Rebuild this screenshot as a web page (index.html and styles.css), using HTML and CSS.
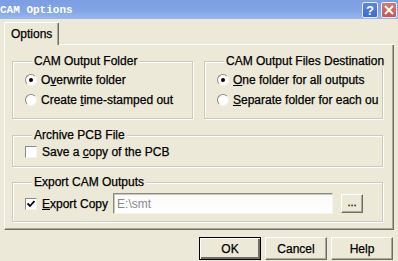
FILE: index.html
```html
<!DOCTYPE html>
<html lang="en">
<head>
    <meta charset="UTF-8">
    <title>CAM Options</title>
    <link rel="stylesheet" href="styles.css">
</head>
<body>
    <div class="window">
        <div class="titlebar">
            <span class="title">CAM Options</span>
            <div class="title-buttons">
                <span class="tb-btn tb-help">?</span>
                <span class="tb-btn tb-close">
                    <svg width="10" height="10" viewBox="0 0 10 10"><path d="M1 1L9 9M9 1L1 9" stroke="#fff" stroke-width="2"/></svg>
                </span>
            </div>
        </div>

        <div class="tabs">
            <div class="tab">Options</div>
            <div class="tab-line"></div>
        </div>

        <div class="panel">
            <div class="row">
                <fieldset class="group">
                    <legend>CAM Output Folder</legend>
                    <label class="option"><span class="radio checked"></span><span>O<u>v</u>erwrite folder</span></label>
                    <label class="option"><span class="radio"></span><span>Create <u>t</u>ime-stamped out</span></label>
                </fieldset>
                <fieldset class="group">
                    <legend>CAM Output Files Destination</legend>
                    <label class="option"><span class="radio checked"></span><span><u>O</u>ne folder for all outputs</span></label>
                    <label class="option"><span class="radio"></span><span><u>S</u>eparate folder for each ou</span></label>
                </fieldset>
            </div>

            <fieldset class="group group-archive">
                <legend>Archive PCB File</legend>
                <label class="option option-short"><span class="check"></span><span>Save a <u>c</u>opy of the PCB</span></label>
            </fieldset>

            <fieldset class="group group-export">
                <legend>Export CAM Outputs</legend>
                <div class="export-row">
                    <label class="option"><span class="check checked">
                        <svg width="8" height="8" viewBox="0 0 8 8"><path d="M0.5 3.5L3 6L7.5 1" fill="none" stroke="#000" stroke-width="1.8"/></svg>
                    </span><span><u>E</u>xport Copy</span></label>
                    <div class="path-input">E:\smt</div>
                    <button class="button button-small">...</button>
                </div>
            </fieldset>
        </div>

        <div class="actions">
            <button class="button button-default">OK</button>
            <button class="button">Cancel</button>
            <button class="button">Help</button>
        </div>
    </div>
</body>
</html>
```

FILE: styles.css
```css
body {
    margin: 0;
    background-color: #ECE9D8;
    font-family: "Liberation Sans", Arial, sans-serif;
    font-size: 12px;
    color: #000;
    -webkit-text-stroke: 0.25px #000;
}
.window {
    width: 398px;
    height: 261px;
    overflow: hidden;
}

/* title bar */
.titlebar {
    height: 19px;
    display: flex;
    align-items: center;
    justify-content: space-between;
    background: linear-gradient(#7b9de2, #83a6e7 60%, #9ab8ee);
}
.title {
    font-family: "Liberation Mono", monospace;
    font-weight: bold;
    font-size: 11px;
    color: #fff;
    -webkit-text-stroke: 0;
    margin-top: 1px;
}
.title-buttons {
    display: flex;
    gap: 3px;
    margin-right: 1px;
    margin-top: 1px;
}
.tb-btn {
    width: 16px;
    height: 16px;
    box-sizing: border-box;
    border: 1px solid #e8eefc;
    border-radius: 2px;
    display: flex;
    align-items: center;
    justify-content: center;
    color: #fff;
    font-weight: bold;
    font-size: 13px;
    -webkit-text-stroke: 0;
}
.tb-help {
    background: linear-gradient(#5a86e0, #3d6ad3);
}
.tb-close {
    background: linear-gradient(#d07a70, #c05a55);
}

/* tabs */
.tabs {
    display: flex;
    margin: 3px 4px 0 4px;
    height: 23px;
}
.tab {
    width: 55px;
    box-sizing: border-box;
    border-top: 1px solid #fff;
    border-left: 1px solid #fff;
    border-right: 1px solid #716f64;
    box-shadow: inset -1px 0 0 #aca899;
    border-radius: 2px 2px 0 0;
    padding: 4px 0 0 6px;
}
.tab-line {
    flex: 1;
    border-bottom: 1px solid #fff;
}

/* main panel */
.panel {
    margin: 0 4px 0 4px;
    padding: 9px 10px 7px 7px;
    border-left: 1px solid #fff;
    border-right: 1px solid #716f64;
    border-bottom: 1px solid #716f64;
    box-shadow: inset -1px -1px 0 #aca899;
}
.row {
    display: grid;
    grid-template-columns: 181px 179px;
    gap: 11px;
}
.group {
    margin: 0;
    min-width: 0;
    padding: 2px 4px 8px 12px;
    border: 1px solid #cdcab9;
    box-shadow: inset 1px 1px 0 #fff, 1px 1px 0 #fff;
}
.group legend {
    padding: 0 2px;
    margin-left: 7px;
    line-height: 14px;
    white-space: nowrap;
    background-color: #ECE9D8;
}
.group-archive {
    margin-top: 9px;
    padding-top: 1px;
    padding-bottom: 5px;
}
.group-export {
    margin-top: 8px;
    padding-top: 4px;
    padding-bottom: 7px;
}

.option {
    display: flex;
    align-items: center;
    gap: 4px;
    height: 20px;
    white-space: nowrap;
}
.option-short {
    height: 18px;
}
.radio {
    flex: none;
    width: 12px;
    height: 12px;
    box-sizing: border-box;
    border-radius: 50%;
    border: 1px solid;
    border-color: #8d8b82 #f4f3ee #f4f3ee #8d8b82;
    background-color: #fff;
    display: flex;
    align-items: center;
    justify-content: center;
}
.radio.checked::after {
    content: '';
    width: 4px;
    height: 4px;
    border-radius: 50%;
    background-color: #000;
}
.check {
    flex: none;
    width: 12px;
    height: 12px;
    box-sizing: border-box;
    border: 1px solid;
    border-color: #8d8b82 #f4f3ee #f4f3ee #8d8b82;
    background-color: #fff;
    display: flex;
    align-items: center;
    justify-content: center;
    margin-right: 1px;
}

.export-row {
    display: flex;
    align-items: center;
    height: 21px;
}
.path-input {
    width: 220px;
    height: 21px;
    box-sizing: border-box;
    margin-left: 5px;
    padding: 3px 3px;
    border: 1px solid;
    border-color: #8d8b82 #f4f3ee #f4f3ee #8d8b82;
    box-shadow: inset 1px 1px 0 #c9c6b8;
    background: linear-gradient(#fafaf8, #fff);
    color: #8a8a8a;
    -webkit-text-stroke: 0;
}

/* buttons */
.button {
    font-family: inherit;
    font-size: 12px;
    color: #000;
    -webkit-text-stroke: 0.25px #000;
    background-color: #ECE9D8;
    width: 62px;
    height: 23px;
    padding: 0;
    border: 1px solid;
    border-color: #fff #716f64 #716f64 #fff;
    box-shadow: inset -1px -1px 0 #aca899;
}
.button-small {
    width: 22px;
    height: 19px;
    margin-left: 8px;
    font-size: 11px;
    line-height: 10px;
    padding-bottom: 4px;
}
.button-default {
    border-color: #000;
    box-shadow: inset 1px 1px 0 #fff, inset -2px -2px 0 #716f64;
}
.actions {
    display: flex;
    justify-content: flex-end;
    gap: 4px;
    margin: 7px 5px 0 0;
}
```
